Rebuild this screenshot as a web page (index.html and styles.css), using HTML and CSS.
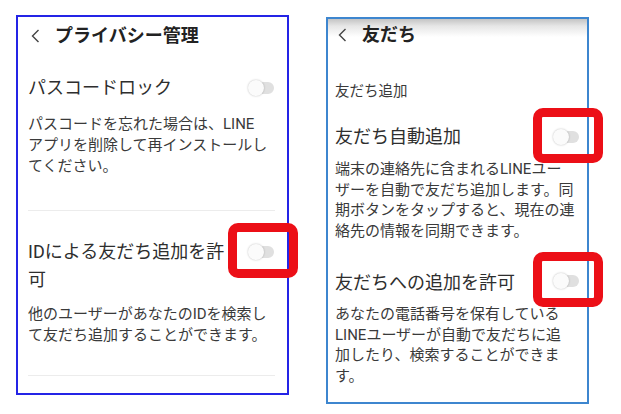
FILE: index.html
```html
<!DOCTYPE html>
<html lang="ja">
<head>
<meta charset="utf-8">
<title>LINE 設定</title>
<link rel="stylesheet" href="styles.css">
</head>
<body>
<div class="page">
  <section class="phone phone-left">
    <header class="bar">
      <svg class="back" width="9" height="14" viewBox="0 0 9 14"><polyline points="7.5,1 1.5,7 7.5,13" fill="none" stroke="#444" stroke-width="1.4"/></svg>
      <h1 class="title">プライバシー管理</h1>
    </header>
    <div class="item item-first">
      <div class="row">
        <span class="label">パスコードロック</span>
        <span class="toggle"></span>
      </div>
      <p class="desc">パスコードを忘れた場合は、LINE<br>アプリを削除して再インストールし<br>てください。</p>
    </div>
    <div class="sep"></div>
    <div class="item item-second">
      <div class="row">
        <span class="label label-wrap">IDによる友だち追加を許<br>可</span>
        <span class="toggle"><span class="mark"></span></span>
      </div>
      <p class="desc desc-second">他のユーザーがあなたのIDを検索し<br>て友だち追加することができます。</p>
    </div>
    <div class="sep"></div>
  </section>

  <section class="phone phone-right">
    <header class="bar bar-shadow">
      <svg class="back" width="9" height="14" viewBox="0 0 9 14"><polyline points="7.5,1 1.5,7 7.5,13" fill="none" stroke="#444" stroke-width="1.4"/></svg>
      <h1 class="title">友だち</h1>
    </header>
    <p class="section">友だち追加</p>
    <div class="item-r">
      <div class="row">
        <span class="label">友だち自動追加</span>
        <span class="toggle"><span class="mark"></span></span>
      </div>
      <p class="desc desc-r">端末の連絡先に含まれるLINEユー<br>ザーを自動で友だち追加します。同<br>期ボタンをタップすると、現在の連<br>絡先の情報を同期できます。</p>
    </div>
    <div class="item-r item-r2">
      <div class="row">
        <span class="label">友だちへの追加を許可</span>
        <span class="toggle toggle-up"><span class="mark"></span></span>
      </div>
      <p class="desc desc-r desc-r2">あなたの電話番号を保有している<br>LINEユーザーが自動で友だちに追<br>加したり、検索することができま<br>す。</p>
    </div>
  </section>
</div>
</body>
</html>
```
FILE: styles.css
```css
* { box-sizing: border-box; }
html, body { margin: 0; padding: 0; background: #fff; }
body {
  font-family: Roboto, "Noto Sans CJK JP", sans-serif;
  color: #333;
}
.page {
  display: flex;
  align-items: flex-start;
  padding-left: 16px;
}
.phone {
  position: relative;
  background: #fff;
}
.phone-left {
  width: 273px;
  height: 380px;
  margin-top: 15px;
  border: 2px solid #2424e6;
  padding: 0 13px 0 10px;
}
.phone-right {
  width: 263px;
  height: 387px;
  margin-top: 17px;
  margin-left: 37px;
  border: 2px solid #3d86cf;
  padding: 0 8px 0 7px;
}
.bar {
  display: flex;
  align-items: center;
  gap: 15px;
  padding-top: 7px;
  padding-left: 3px;
}
.bar-shadow {
  margin: 0 -8px 0 -7px;
  padding: 2px 8px 0 10px;
  height: 30px;
  background: linear-gradient(#c4c4c4 0, #e6e6e6 7px, #fff 18px);
}
.back { flex: none; }
.title {
  margin: 0;
  font-size: 18px;
  line-height: 24px;
  font-weight: 700;
  color: #222;
  white-space: nowrap;
}
.item-first { padding: 26px 0 33px; }
.item-second { padding: 26.5px 0 29px; }
.row {
  display: flex;
  justify-content: space-between;
  align-items: flex-start;
}
.label {
  font-size: 18px;
  line-height: 28px;
  white-space: nowrap;
  color: #2e2e2e;
}
.label-wrap { line-height: 28.5px; }
.desc {
  margin: 12px 0 0;
  font-size: 15px;
  line-height: 21px;
  white-space: nowrap;
  color: #3a3a3a;
}
.desc-second { margin-top: 9.5px; }
.sep { height: 1px; background: #ececec; margin-right: -1px; }
.section {
  margin: 32.5px 0 0;
  font-size: 14.5px;
  line-height: 20px;
  color: #3a3a3a;
}
.item-r { padding-top: 21.5px; }
.item-r2 { padding-top: 28px; }
.desc-r { margin-top: 8px; line-height: 20.5px; }
.desc-r2 { margin-top: 7px; }
.toggle {
  position: relative;
  flex: none;
  width: 26px;
  height: 16px;
  margin-top: 6px;
}
.toggle-up { margin-top: 3.5px; }
.toggle::before {
  content: "";
  position: absolute;
  left: 4px; right: 0; top: 2px;
  height: 12px;
  border-radius: 6px;
  background: #e0e0e0;
}
.toggle::after {
  content: "";
  position: absolute;
  left: 0; top: 0;
  width: 16px; height: 16px;
  border-radius: 50%;
  background: #fbfbfb;
  box-shadow: 0 0 2px rgba(0,0,0,0.28);
}
.mark {
  position: absolute;
  left: -20px;
  top: -21px;
  width: 70px;
  height: 55px;
  border: 9px solid #ec0f17;
  border-radius: 10px;
  z-index: 2;
}
```
